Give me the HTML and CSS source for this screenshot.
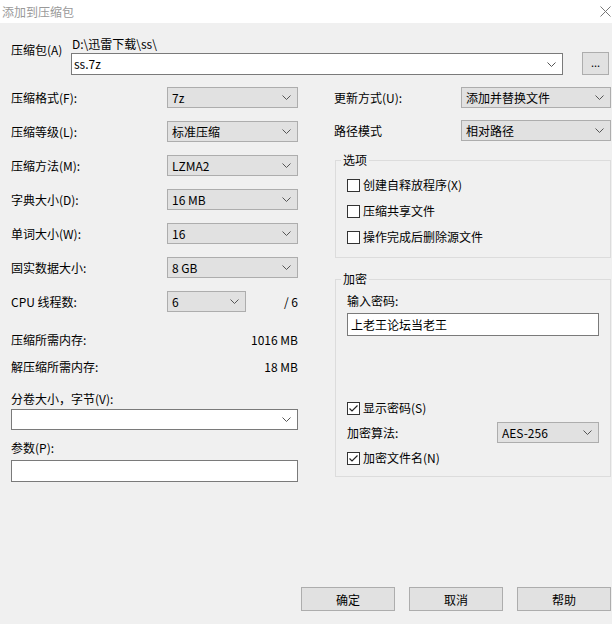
FILE: index.html
```html
<!DOCTYPE html>
<html lang="zh-CN">
<head>
    <meta charset="UTF-8">
    <meta name="viewport" content="width=device-width, initial-scale=1.0">
    <link rel="stylesheet" href="styles.css">
    <title>添加到压缩包</title>
</head>
<body>
    <div class="window">
        <div class="titlebar">
            <span class="title">添加到压缩包</span>
            <svg class="close" width="11" height="11" viewBox="0 0 11 11"><path d="M0.5 0.5L10.5 10.5M10.5 0.5L0.5 10.5" stroke="#777" stroke-width="1" fill="none"/></svg>
        </div>

        <div class="content">
            <div class="archive">
                <span class="archive-label">压缩包(A)</span>
                <div class="archive-main">
                    <div class="archive-path">D:\迅雷下载\ss\</div>
                    <div class="combo">
                        <span>ss.7z</span>
                        <svg class="chev" width="9" height="5" viewBox="0 0 9 5"><polyline points="0.5,0.5 4.5,4.5 8.5,0.5" fill="none" stroke="#555"/></svg>
                    </div>
                </div>
                <button class="browse">...</button>
            </div>

            <div class="columns">
                <div class="left">
                    <div class="field">
                        <span class="label">压缩格式(F):</span>
                        <div class="select"><span>7z</span><svg class="chev" width="9" height="5" viewBox="0 0 9 5"><polyline points="0.5,0.5 4.5,4.5 8.5,0.5" fill="none" stroke="#555"/></svg></div>
                    </div>
                    <div class="field">
                        <span class="label">压缩等级(L):</span>
                        <div class="select"><span>标准压缩</span><svg class="chev" width="9" height="5" viewBox="0 0 9 5"><polyline points="0.5,0.5 4.5,4.5 8.5,0.5" fill="none" stroke="#555"/></svg></div>
                    </div>
                    <div class="field">
                        <span class="label">压缩方法(M):</span>
                        <div class="select"><span>LZMA2</span><svg class="chev" width="9" height="5" viewBox="0 0 9 5"><polyline points="0.5,0.5 4.5,4.5 8.5,0.5" fill="none" stroke="#555"/></svg></div>
                    </div>
                    <div class="field">
                        <span class="label">字典大小(D):</span>
                        <div class="select"><span>16 MB</span><svg class="chev" width="9" height="5" viewBox="0 0 9 5"><polyline points="0.5,0.5 4.5,4.5 8.5,0.5" fill="none" stroke="#555"/></svg></div>
                    </div>
                    <div class="field">
                        <span class="label">单词大小(W):</span>
                        <div class="select"><span>16</span><svg class="chev" width="9" height="5" viewBox="0 0 9 5"><polyline points="0.5,0.5 4.5,4.5 8.5,0.5" fill="none" stroke="#555"/></svg></div>
                    </div>
                    <div class="field">
                        <span class="label">固实数据大小:</span>
                        <div class="select"><span>8 GB</span><svg class="chev" width="9" height="5" viewBox="0 0 9 5"><polyline points="0.5,0.5 4.5,4.5 8.5,0.5" fill="none" stroke="#555"/></svg></div>
                    </div>
                    <div class="field">
                        <span class="label">CPU 线程数:</span>
                        <div class="select small"><span>6</span><svg class="chev" width="9" height="5" viewBox="0 0 9 5"><polyline points="0.5,0.5 4.5,4.5 8.5,0.5" fill="none" stroke="#555"/></svg></div>
                        <span class="threads">/ 6</span>
                    </div>

                    <div class="memory first">
                        <span>压缩所需内存:</span>
                        <span>1016 MB</span>
                    </div>
                    <div class="memory">
                        <span>解压缩所需内存:</span>
                        <span>18 MB</span>
                    </div>

                    <div class="block-label volume-label">分卷大小，字节(V):</div>
                    <div class="combo volume">
                        <span></span>
                        <svg class="chev" width="9" height="5" viewBox="0 0 9 5"><polyline points="0.5,0.5 4.5,4.5 8.5,0.5" fill="none" stroke="#555"/></svg>
                    </div>

                    <div class="block-label params-label">参数(P):</div>
                    <div class="textbox params"></div>
                </div>

                <div class="right">
                    <div class="field">
                        <span class="label">更新方式(U):</span>
                        <div class="select"><span>添加并替换文件</span><svg class="chev" width="9" height="5" viewBox="0 0 9 5"><polyline points="0.5,0.5 4.5,4.5 8.5,0.5" fill="none" stroke="#555"/></svg></div>
                    </div>
                    <div class="field">
                        <span class="label">路径模式</span>
                        <div class="select"><span>相对路径</span><svg class="chev" width="9" height="5" viewBox="0 0 9 5"><polyline points="0.5,0.5 4.5,4.5 8.5,0.5" fill="none" stroke="#555"/></svg></div>
                    </div>

                    <fieldset class="group options">
                        <legend>选项</legend>
                        <div class="check"><span class="box"></span>创建自释放程序(X)</div>
                        <div class="check"><span class="box"></span>压缩共享文件</div>
                        <div class="check"><span class="box"></span>操作完成后删除源文件</div>
                    </fieldset>

                    <fieldset class="group encrypt">
                        <legend>加密</legend>
                        <div class="block-label">输入密码:</div>
                        <div class="textbox password">上老王论坛当老王</div>
                        <div class="check show-password"><span class="box"><svg width="11" height="11" viewBox="0 0 11 11"><polyline points="1.5,5.5 4,8 9.5,2.5" fill="none" stroke="#222" stroke-width="1.2"/></svg></span>显示密码(S)</div>
                        <div class="field algo">
                            <span class="label">加密算法:</span>
                            <div class="select"><span>AES-256</span><svg class="chev" width="9" height="5" viewBox="0 0 9 5"><polyline points="0.5,0.5 4.5,4.5 8.5,0.5" fill="none" stroke="#555"/></svg></div>
                        </div>
                        <div class="check names"><span class="box"><svg width="11" height="11" viewBox="0 0 11 11"><polyline points="1.5,5.5 4,8 9.5,2.5" fill="none" stroke="#222" stroke-width="1.2"/></svg></span>加密文件名(N)</div>
                    </fieldset>
                </div>
            </div>

            <div class="buttons">
                <button class="btn">确定</button>
                <button class="btn">取消</button>
                <button class="btn">帮助</button>
            </div>
        </div>
    </div>
</body>
</html>
```

FILE: styles.css
```css
* {
    box-sizing: border-box;
}

body {
    margin: 0;
    background-color: #f0f0f0;
    font-family: "Noto Sans CJK SC", "Liberation Sans", sans-serif;
    font-size: 12px;
    line-height: 14px;
    color: #000;
}

.window {
    display: flex;
    flex-direction: column;
    width: 612px;
    height: 624px;
}

.titlebar {
    display: flex;
    justify-content: space-between;
    align-items: center;
    height: 23px;
    padding: 0 1px 0 2px;
    background-color: #ffffff;
}

.title {
    color: #999;
    font-size: 12px;
}

.content {
    display: flex;
    flex-direction: column;
    flex: 1;
    padding: 14px 1px 13px 11px;
}

/* archive name row */
.archive {
    display: flex;
    align-items: flex-end;
}

.archive-label {
    width: 60px;
    align-self: flex-start;
    margin-top: 6px;
}

.archive-main {
    width: 492px;
}

.archive-path {
    padding-left: 1px;
}

.combo {
    display: flex;
    justify-content: space-between;
    align-items: center;
    height: 22px;
    margin-top: 2px;
    padding: 0 6px 0 2px;
    background-color: #ffffff;
    border: 1px solid #7a7a7a;
}

.browse {
    width: 27px;
    height: 23px;
    margin-left: 19px;
    padding: 0 0 4px;
    font-family: inherit;
    font-size: 11px;
    background-color: #e1e1e1;
    border: 1px solid #adadad;
}

/* two columns */
.columns {
    display: flex;
    gap: 36px;
    margin-top: 12px;
}

.left {
    display: flex;
    flex-direction: column;
    width: 287px;
}

.right {
    display: flex;
    flex-direction: column;
    width: 277px;
}

.field {
    display: flex;
    align-items: center;
    height: 21px;
}

.left .field + .field {
    margin-top: 13px;
}

.right > .field + .field {
    margin-top: 12px;
}

.left .label {
    width: 156px;
}

.right .label {
    width: 127px;
}

.select {
    display: flex;
    justify-content: space-between;
    align-items: center;
    flex: 1;
    height: 21px;
    padding: 0 6px 0 4px;
    background-color: #e1e1e1;
    border: 1px solid #adadad;
}

.select.small {
    flex: 0 0 79px;
}

.threads {
    flex: 1;
    text-align: right;
}

.chev {
    flex-shrink: 0;
}

.memory {
    display: flex;
    justify-content: space-between;
    margin-top: 13px;
}

.memory.first {
    margin-top: 21px;
}

.volume-label {
    margin-top: 18px;
}

.volume {
    margin-top: 3px;
    height: 21px;
}

.params-label {
    margin-top: 11px;
}

.textbox {
    height: 22px;
    margin-top: 5px;
    padding: 3px 3px 0;
    background-color: #ffffff;
    border: 1px solid #7a7a7a;
}

/* group boxes */
.group {
    margin: 12px 0 0 1px;
    padding: 10px 11px 12px;
    min-width: 0;
    border: 1px solid #dcdcdc;
}

.group legend {
    margin-left: -6px;
    padding: 0 2px;
    line-height: 14px;
}

.check {
    display: flex;
    align-items: center;
    height: 16px;
}

.options .check + .check {
    margin-top: 10px;
}

.box {
    display: flex;
    width: 13px;
    height: 13px;
    margin-right: 3px;
    background-color: #ffffff;
    border: 1px solid #333;
}

.encrypt {
    margin-top: 14px;
    padding: 8px 11px 10px;
}

.password {
    height: 23px;
    padding-top: 4px;
}

.show-password {
    margin-top: 64px;
}

.algo {
    margin-top: 6px;
}

.algo .label {
    width: 150px;
}

.names {
    margin-top: 7px;
}

/* bottom buttons */
.buttons {
    display: flex;
    justify-content: flex-end;
    gap: 14px;
    margin-top: auto;
}

.btn {
    width: 94px;
    height: 24px;
    font-family: inherit;
    font-size: 12px;
    background-color: #e1e1e1;
    border: 1px solid #adadad;
}
```
